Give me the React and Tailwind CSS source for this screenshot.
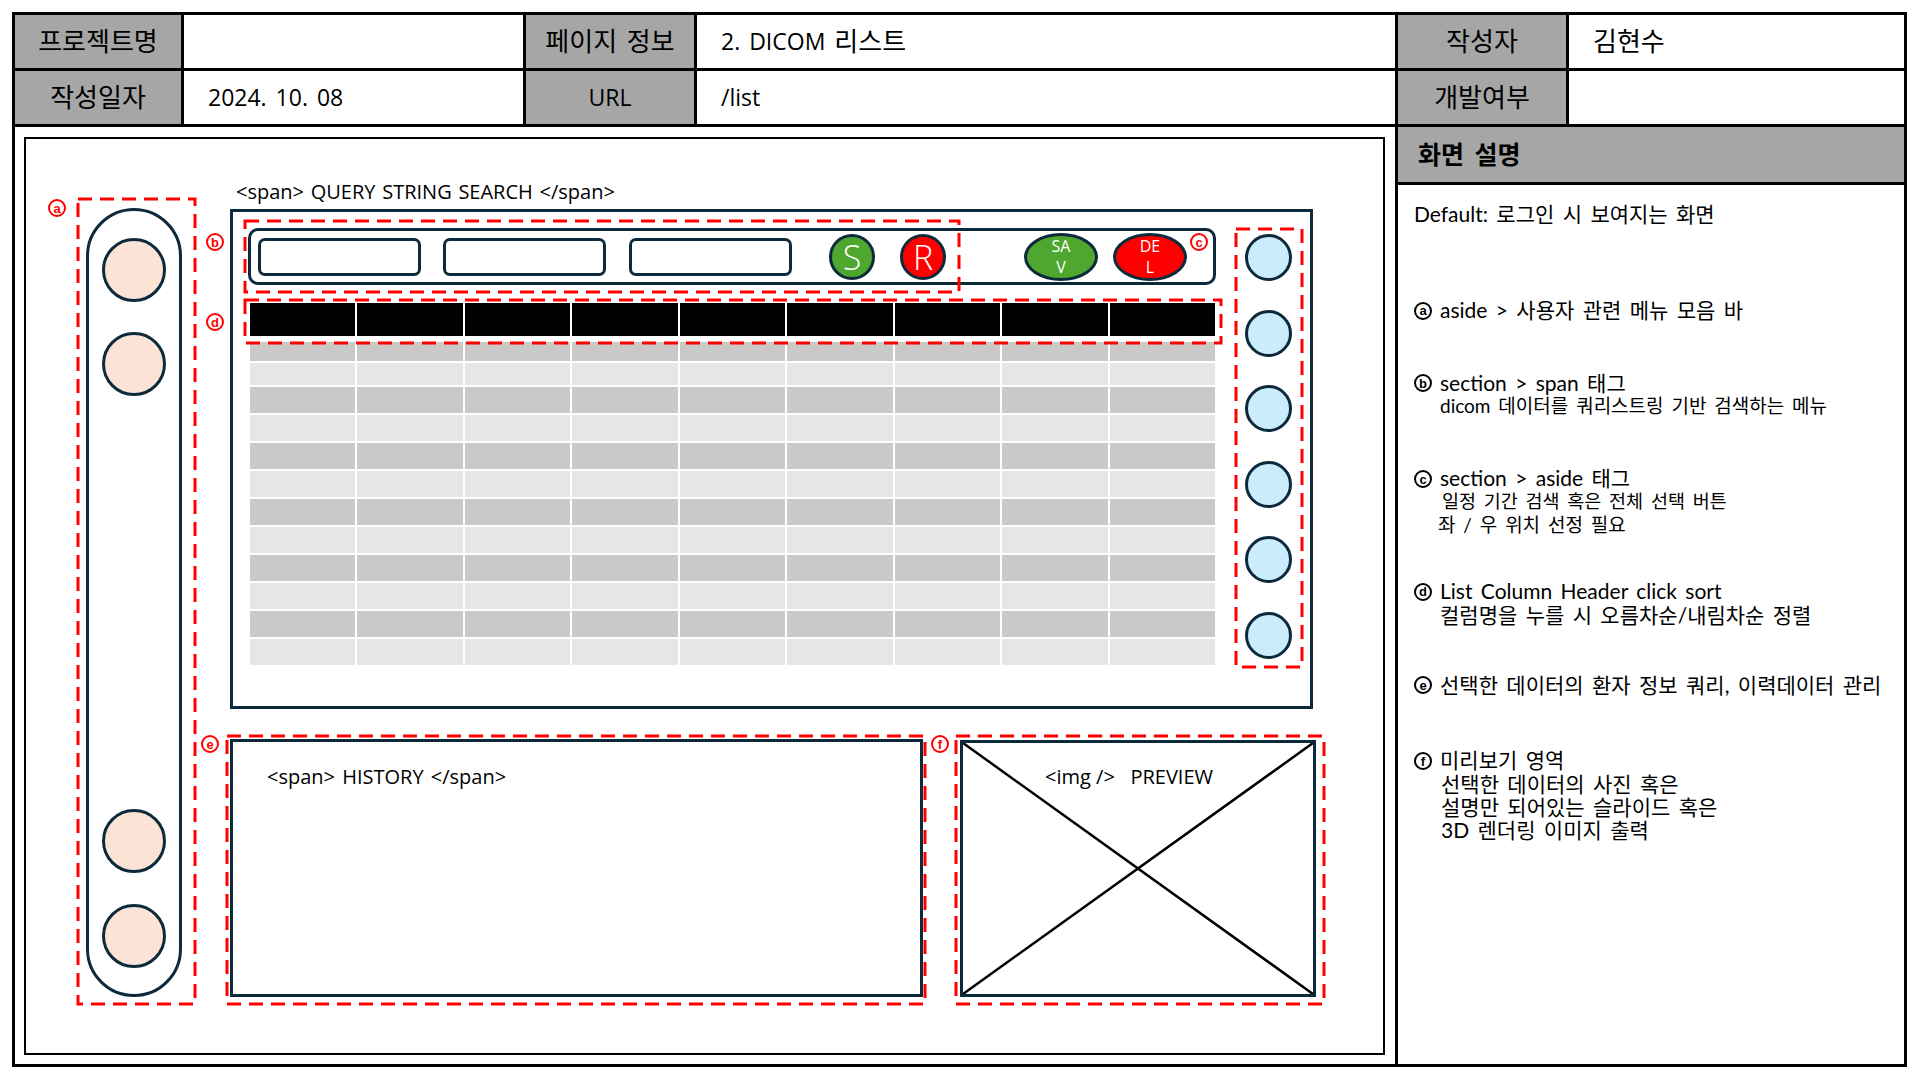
const rowHeights = ['h-[19px]', 'h-[22px]', 'h-[26px]', 'h-[26px]', 'h-[26px]', 'h-[26px]', 'h-[26px]', 'h-[26px]', 'h-[26px]', 'h-[26px]', 'h-[26px]', 'h-[26px]']
const cols = [0, 1, 2, 3, 4, 5, 6, 7, 8]

function Dash({ className = '', pos = 'relative', children }) {
  return (
    <div className={`${pos} ${className}`}>
      {children}
      <svg className="pointer-events-none absolute left-[1.5px] top-[1.5px] h-[calc(100%-3px)] w-[calc(100%-3px)] overflow-visible">
        <rect x="0" y="0" width="100%" height="100%" fill="none" stroke="#ff0000" strokeWidth="3" strokeDasharray="14 8" />
      </svg>
    </div>
  )
}

// red annotation marker, centred on its point
function Mark({ ch, className = '' }) {
  return (
    <span className={`absolute flex h-[18px] w-[18px] -translate-x-1/2 -translate-y-1/2 items-center justify-center rounded-full border-2 border-[#ff0000] bg-white font-['Liberation_Sans',sans-serif] text-[13px] font-bold leading-none text-[#ff0000] ${className}`}>
      {ch}
    </span>
  )
}

// black circled letter used in the description text
function Circled({ ch }) {
  return (
    <span className="relative top-[-2px] mr-[8px] inline-flex h-[18px] w-[18px] items-center justify-center rounded-full border-2 border-black align-middle font-['Liberation_Sans',sans-serif] text-[13px] font-bold leading-none">
      {ch}
    </span>
  )
}

function Ko({ children }) {
  return <span className="text-[26px]">{children}</span>
}

function Label({ className = '', children }) {
  return (
    <div className={`flex items-center justify-center border-r-[3px] border-black bg-[#a6a6a6] ${className}`}>{children}</div>
  )
}

function Value({ className = '', children }) {
  return <div className={`flex items-center pl-[24px] ${className}`}>{children}</div>
}

function Peach() {
  return <div className="h-[64px] w-[64px] rounded-full border-[3px] border-[#0c2a3b] bg-[#fbe4d6]" />
}

function Blue() {
  return <div className="h-[47px] w-[47px] shrink-0 rounded-full border-[3px] border-[#0c2a3b] bg-[#cbecfb]" />
}

function Input({ className = '' }) {
  return <div className={`h-[38px] w-[163px] rounded-[7px] border-[3px] border-[#0c2a3b] ${className}`} />
}

export default function App() {
  return (
    <div className="h-[1079px] w-[1919px] overflow-hidden bg-white font-['Open_Sans','Noto_Sans_CJK_KR',sans-serif] text-black">
      <div className="ml-[12px] mt-[12px] flex h-[1055px] w-[1895px] flex-col border-[3px] border-black">
        {/* header table */}
        <div className="flex h-[56px] border-b-[3px] border-black text-[23px] [word-spacing:3px]">
          <Label className="w-[169px]"><Ko>프로젝트명</Ko></Label>
          <Value className="w-[342px] border-r-[3px] border-black" />
          <Label className="w-[171px]"><Ko>페이지 정보</Ko></Label>
          <Value className="w-[701px] border-r-[3px] border-black">2. DICOM&nbsp;<Ko>리스트</Ko></Value>
          <Label className="w-[171px]"><Ko>작성자</Ko></Label>
          <Value className="flex-1"><Ko>김현수</Ko></Value>
        </div>
        <div className="flex h-[56px] border-b-[3px] border-black text-[23px] [word-spacing:3px]">
          <Label className="w-[169px]"><Ko>작성일자</Ko></Label>
          <Value className="w-[342px] border-r-[3px] border-black">2024. 10. 08</Value>
          <Label className="w-[171px]">URL</Label>
          <Value className="w-[701px] border-r-[3px] border-black">/list</Value>
          <Label className="w-[171px]"><Ko>개발여부</Ko></Label>
          <Value className="flex-1" />
        </div>

        <div className="flex flex-1">
          {/* wireframe */}
          <div className="w-[1383px] border-r-[3px] border-black pb-[9px] pl-[9px] pr-[10px] pt-[10px]">
            <div className="flex h-full items-start border-2 border-black">
              {/* a: aside */}
              <Dash className="ml-[50px] mt-[58px] h-[808px] w-[120px] pl-[10px] pt-[11px]">
                <Mark ch="a" className="left-[-19px] top-[11px]" />
                <div className="flex h-[789px] w-[96px] flex-col items-center rounded-full border-[3px] border-[#0c2a3b] pb-[26px] pt-[27px]">
                  <Peach />
                  <div className="mt-[30px]"><Peach /></div>
                  <div className="flex-1" />
                  <Peach />
                  <div className="mt-[31px]"><Peach /></div>
                </div>
              </Dash>

              <div className="ml-[29px] flex flex-col">
                <div className="mt-[40px] h-[26px] pl-[11px] text-[20px] leading-[26px] [word-spacing:1.5px]">&lt;span&gt; QUERY STRING SEARCH &lt;/span&gt;</div>

                {/* section */}
                <div className="relative ml-[5px] mt-[4px] flex h-[500px] w-[1083px] border-[3px] border-[#0c2a3b]">
                  <div className="w-[983px] pl-[15px] pt-[16px]">
                    <div className="flex h-[57px] w-[968px] items-center rounded-[10px] border-[3px] border-[#0c2a3b] pl-[7px] text-white">
                      <Input />
                      <Input className="ml-[22px]" />
                      <Input className="ml-[23px]" />
                      <div className="ml-[37px] flex h-[46px] w-[46px] items-center justify-center rounded-full border-[3px] border-[#0c2a3b] bg-[#4ea72e] text-[34px] font-light leading-none">S</div>
                      <div className="ml-[25px] flex h-[46px] w-[46px] items-center justify-center rounded-full border-[3px] border-[#0c2a3b] bg-[#ff0000] text-[34px] font-light leading-none">R</div>
                      <div className="ml-[78px] flex h-[48px] w-[74px] flex-col items-center justify-center rounded-[50%] border-[3px] border-[#0c2a3b] bg-[#4ea72e] text-[16px] leading-[21px]">
                        <span>SA</span>
                        <span>V</span>
                      </div>
                      <div className="ml-[15px] flex h-[48px] w-[74px] flex-col items-center justify-center rounded-[50%] border-[3px] border-[#0c2a3b] bg-[#ff0000] text-[16px] leading-[21px]">
                        <span>DE</span>
                        <span>L</span>
                      </div>
                    </div>

                    <div className="ml-[2px] mt-[18px] w-[965px]">
                      <div className="flex h-[33px] gap-[2px]">
                        {cols.map(c => (
                          <div key={c} className="flex-1 bg-black" />
                        ))}
                      </div>
                      <div className="mt-[6px] flex flex-col gap-[2px]">
                        {rowHeights.map((h, i) => (
                          <div key={i} className={`flex gap-[2px] ${h}`}>
                            {cols.map(c => (
                              <div key={c} className={`flex-1 ${i % 2 === 0 ? 'bg-[#c9c9c9]' : 'bg-[#e6e6e6]'}`} />
                            ))}
                          </div>
                        ))}
                      </div>
                    </div>
                  </div>

                  <Dash className="ml-[18px] mt-[15px] flex h-[441px] w-[69px] flex-col items-center gap-[28.6px] pt-[7px]">
                    <Blue />
                    <Blue />
                    <Blue />
                    <Blue />
                    <Blue />
                    <Blue />
                  </Dash>

                  <Dash pos="absolute" className="left-[10px] top-[7px] h-[74px] w-[717px]" />
                  <Dash pos="absolute" className="left-[10px] top-[86px] h-[46px] w-[979px]" />
                  <Mark ch="b" className="left-[-18px] top-[30px]" />
                  <Mark ch="d" className="left-[-18px] top-[110px]" />
                  <Mark ch="c" className="left-[966px] top-[30px]" />
                </div>

                {/* bottom row */}
                <div className="mt-[25px] flex">
                  <Dash className="h-[271px] w-[701px] pl-[5px] pt-[5px]">
                    <Mark ch="e" className="left-[-15px] top-[10px]" />
                    <div className="h-[258px] w-[693px] border-[3px] border-[#0c2a3b] pl-[34px] pt-[22px] text-[20px] leading-[26px] [word-spacing:2px]">
                      &lt;span&gt; HISTORY &lt;/span&gt;
                    </div>
                  </Dash>
                  <Dash className="ml-[28px] h-[271px] w-[371px] pl-[6px] pt-[6px]">
                    <Mark ch="f" className="left-[-14px] top-[10px]" />
                    <div className="relative h-[257px] w-[356px] border-[3px] border-[#0c2a3b]">
                      <svg className="absolute inset-0 h-full w-full" viewBox="0 0 100 100" preserveAspectRatio="none">
                        <line x1="0" y1="0" x2="100" y2="100" stroke="#000" strokeWidth="2.5" vectorEffect="non-scaling-stroke" />
                        <line x1="100" y1="0" x2="0" y2="100" stroke="#000" strokeWidth="2.5" vectorEffect="non-scaling-stroke" />
                      </svg>
                      <div className="relative whitespace-pre pl-[82px] pt-[21px] text-[20px] leading-[26px]">{'<img />   PREVIEW'}</div>
                    </div>
                  </Dash>
                </div>
              </div>
            </div>
          </div>

          {/* description */}
          <div className="flex flex-1 flex-col">
            <div className="flex h-[58px] items-center border-b-[3px] border-black bg-[#a6a6a6] pl-[20px] text-[25px] font-bold [word-spacing:4px]">
              화면 설명
            </div>
            <div className="pl-[16px] pt-[17px] font-['Lato','Noto_Sans_CJK_KR',sans-serif] text-[21px] leading-[23px] [word-spacing:3px]">
              <p>Default: 로그인 시 보여지는 화면</p>
              <p className="mt-[73px]"><Circled ch="a" />aside &gt; 사용자 관련 메뉴 모음 바</p>
              <div className="mt-[49px]">
                <p><Circled ch="b" />section &gt; span 태그</p>
                <p className="pl-[26px] text-[19px]">dicom 데이터를 쿼리스트링 기반 검색하는 메뉴</p>
              </div>
              <div className="mt-[49px]">
                <p><Circled ch="c" />section &gt; aside 태그</p>
                <p className="pl-[28px] text-[18.5px]">일정 기간 검색 혹은 전체 선택 버튼</p>
                <p className="pl-[24px] text-[19px]">좌 / 우 위치 선정 필요</p>
              </div>
              <div className="mt-[43px]">
                <p><Circled ch="d" />List Column Header click sort</p>
                <p className="pl-[26px]">컬럼명을 누를 시 오름차순/내림차순 정렬</p>
              </div>
              <p className="mt-[47px]"><Circled ch="e" />선택한 데이터의 환자 정보 쿼리, 이력데이터 관리</p>
              <div className="mt-[52px]">
                <p><Circled ch="f" />미리보기 영역</p>
                <p className="pl-[27px]">선택한 데이터의 사진 혹은</p>
                <p className="pl-[27px]">설명만 되어있는 슬라이드 혹은</p>
                <p className="pl-[27px]">3D 렌더링 이미지 출력</p>
              </div>
            </div>
          </div>
        </div>
      </div>
    </div>
  )
}
